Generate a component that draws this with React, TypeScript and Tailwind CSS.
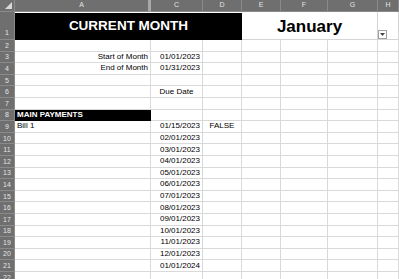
import React from "react";

const cols = ["A", "C", "D", "E", "F", "G", "H"];

type Cell = { text?: string; cls?: string };

const dates = [
  "02/01/2023",
  "03/01/2023",
  "04/01/2023",
  "05/01/2023",
  "06/01/2023",
  "07/01/2023",
  "08/01/2023",
  "09/01/2023",
  "10/01/2023",
  "11/01/2023",
  "12/01/2023",
  "01/01/2024",
];

function rowData(r: number): Record<string, Cell> {
  const d: Record<string, Cell> = {};
  if (r === 3) {
    d.A = { text: "Start of Month", cls: "justify-end pr-[2px]" };
    d.C = { text: "01/01/2023", cls: "justify-end pr-[2px]" };
  }
  if (r === 4) {
    d.A = { text: "End of Month", cls: "justify-end pr-[2px]" };
    d.C = { text: "01/31/2023", cls: "justify-end pr-[2px]" };
  }
  if (r === 6) d.C = { text: "Due Date", cls: "justify-center" };
  if (r === 8)
    d.A = {
      text: "MAIN PAYMENTS",
      cls: "bg-black text-white font-bold pl-[2px] border-black",
    };
  if (r === 9) {
    d.A = { text: "Bill 1", cls: "pl-[2px]" };
    d.C = { text: "01/15/2023", cls: "justify-end pr-[2px]" };
    d.D = { text: "FALSE", cls: "justify-center" };
  }
  if (r >= 10 && r <= 21)
    d.C = { text: dates[r - 10], cls: "justify-end pr-[2px]" };
  return d;
}

export default function App() {
  const rows = Array.from({ length: 21 }, (_, i) => i + 2);
  return (
    <div
      className="w-[399px] h-[279px] overflow-hidden bg-white text-[#000] relative"
      style={{ fontFamily: '"Liberation Sans", Arial, sans-serif' }}
    >
      <div className="grid grid-cols-[15px_136px_52px_39px_39px_47px_50px_1fr] grid-rows-[12px_28px_repeat(21,11.6px)]">
        {/* header row */}
        <div className="bg-[#6f6f6f] border-r border-b border-[#8a8a8a] relative">
          <svg
            className="absolute right-[2px] bottom-[2px]"
            width="7"
            height="7"
            viewBox="0 0 7 7"
          >
            <polygon points="7,0 7,7 0,7" fill="#d8d8d8" />
          </svg>
        </div>
        {cols.map((c) => (
          <div
            key={c}
            className={`bg-[#6f6f6f] border-b border-[#8a8a8a] flex items-center justify-center text-[7px] text-[#e4e4e4] ${
              c === "A" ? "border-r-[3px] border-r-[#a8a8a8]" : "border-r"
            }`}
          >
            {c}
          </div>
        ))}

        {/* row 1 */}
        <div className="bg-[#6f6f6f] border-r border-b border-[#8a8a8a] flex items-end justify-center pb-[1px] text-[7px] text-[#e4e4e4]">
          1
        </div>
        <div className="col-span-3 bg-black flex items-center justify-center text-white font-bold text-[13.5px] border-t border-white">
          CURRENT MONTH
        </div>
        <div className="col-span-3 flex items-center justify-center font-bold text-[17px] border-r border-b border-[#d4d4d4] relative">
          <span className="mt-[2px]">January</span>
        </div>
        <div className="border-r border-b border-[#d4d4d4] relative">
          <div className="absolute left-0 top-[18px] w-[9px] h-[9px] border border-[#a0a0a0] bg-white flex items-center justify-center">
            <svg width="5" height="3" viewBox="0 0 5 3">
              <polygon points="0,0 5,0 2.5,3" fill="#444" />
            </svg>
          </div>
        </div>

        {rows.map((r) => {
          const d = rowData(r);
          return (
            <React.Fragment key={r}>
              <div className="bg-[#6f6f6f] border-r border-b border-[#8a8a8a] flex items-center justify-center text-[7px] text-[#e4e4e4] leading-none">
                {r}
              </div>
              {cols.map((c) => {
                const cell = d[c];
                return (
                  <div
                    key={c}
                    className={`border-r border-b border-[#d9d9d9] flex items-center text-[8px] leading-none whitespace-nowrap overflow-visible ${
                      cell?.cls ?? ""
                    }`}
                  >
                    {cell?.text}
                  </div>
                );
              })}
            </React.Fragment>
          );
        })}
      </div>
    </div>
  );
}
